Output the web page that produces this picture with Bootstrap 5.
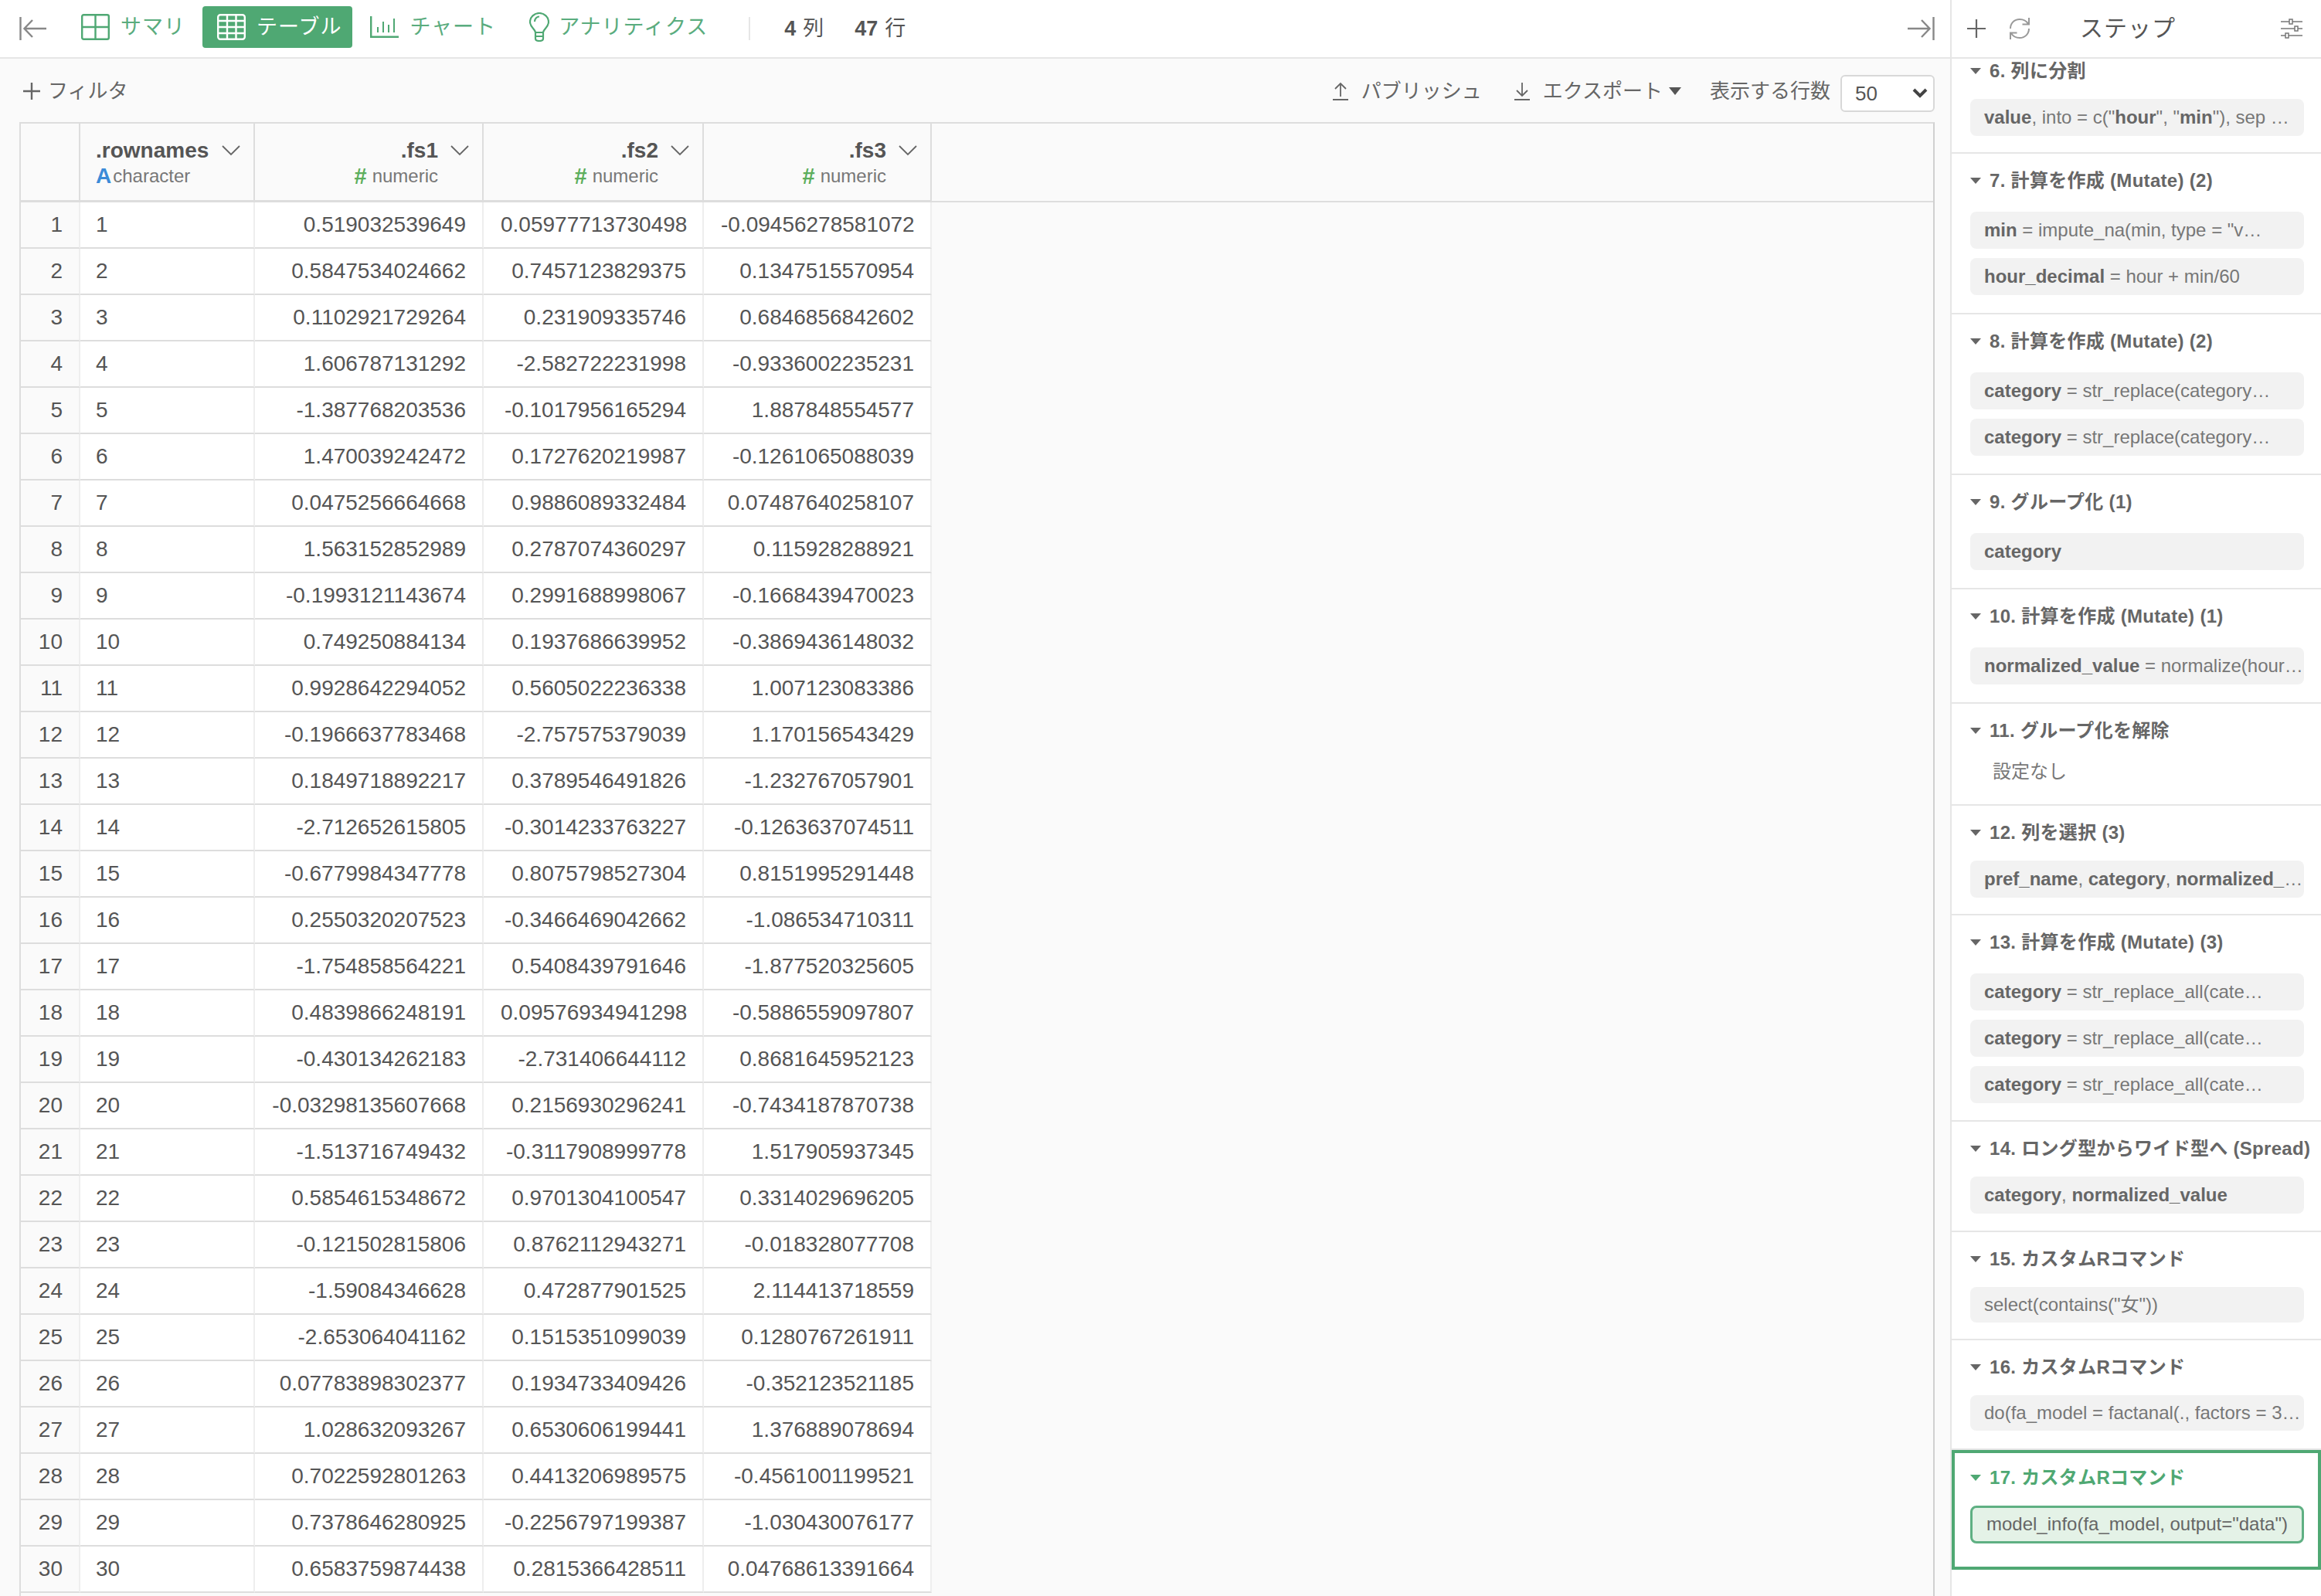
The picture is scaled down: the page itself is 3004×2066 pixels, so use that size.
<!DOCTYPE html>
<html lang="ja">
<head>
<meta charset="utf-8">
<title>テーブル</title>
<link href="https://cdn.jsdelivr.net/npm/bootstrap@5.3.0/dist/css/bootstrap.min.css" rel="stylesheet">
<style>
html,body{height:2066px;overflow:hidden}
body{font-family:"Liberation Sans","Noto Sans CJK JP",sans-serif;background:#fff;color:#555;font-size:26px}
:root{--ex-green:#4fa873}
.app-shell{height:2066px;width:3004px}
.main-col{width:2526px;border-right:2px solid #e6e6e6;background:#fafafa}
.top-bar{height:76px;background:#fff;border-bottom:2px solid #e6e6e6}
.top-bar svg,.side-head svg{flex:none;display:block}
.back-ico{margin-left:25px}
.view-tabs{margin-left:26px;gap:6px;margin-top:-4px}
.view-tab{height:54px;padding:0 16px 0 19px;color:#5aac7e;font-size:27px;letter-spacing:1px;gap:14px;text-decoration:none;border-radius:4px;line-height:1}
.view-tab.is-on{background:var(--ex-green);color:#fff;padding-right:14px;margin-right:-2px}
.tab-chart{padding-right:18px}
.tab-ins{padding-left:19px;gap:12px}
.bar-sep{width:2px;height:30px;background:#e6e6e6;margin-left:37px;margin-right:44px}
.dim-txt{margin-right:40px;color:#555;font-size:27px}
.dim-txt b{margin-right:9px}
.fwd-ico{margin-right:20px}
.tool-row{height:82px;padding:2px 20px 0 30px;color:#666}
.plain-act{gap:10px;line-height:1;color:#666}
.plain-act .act-ico{flex:none}
.act-pub{margin-right:42px;gap:17px}
.act-exp{margin-right:37px;gap:17px}
.act-exp .caret-ico{margin-left:-9px}
.row-sel{width:122px;height:48px;font-size:26px;padding:0 0 0 17px;color:#555;border:2px solid #d8d8d8;border-radius:6px;background-color:#fff;background-image:url("data:image/svg+xml,%3csvg xmlns='http://www.w3.org/2000/svg' viewBox='0 0 20 14'%3e%3cpath fill='none' stroke='%23444' stroke-width='4' d='M2 2l8 8 8-8'/%3e%3c/svg%3e");background-size:20px 14px;background-position:right 7px center;margin-left:13px;margin-top:6px}
.grid-wrap{margin:0 20px 0 25px;border:2px solid #ddd;border-bottom:0;border-right-color:#d0d0d0;background:#fafafa;height:1908px;overflow:hidden}
.data-grid{table-layout:fixed;width:100%;border-collapse:separate;border-spacing:0;margin:0;font-size:28px;--bs-table-bg:transparent;color:#555}
.data-grid th,.data-grid td{padding:0 21px 0 22px;line-height:1.2;color:#555;box-shadow:none}
.data-grid thead th{height:102px;background:#fafafa;border-right:2px solid #ddd;border-bottom:3px solid #ddd;font-weight:700;vertical-align:top}
.data-grid thead th.fill-col{border-right:0;border-bottom:2px solid #ddd}
.data-grid tbody td{height:60px;background:#fff;border-right:2px solid #eee;border-bottom:2px solid #ddd;vertical-align:middle;text-align:right;white-space:nowrap;font-weight:400}
.data-grid tbody td.idx-cell{background:#fafafa}
.data-grid tbody td.name-cell{text-align:left;padding-left:20px}
.data-grid tbody td.fill-col{background:transparent;border:0}
.w-idx{width:77px}.w-name{width:226px}.w-a{width:296px}.w-b{width:285px}.w-c{width:295px}
.data-grid th.w-name{padding-left:20px;padding-right:17px}
.head-name{height:32px;margin-top:19px;line-height:32px;gap:16px}
.head-type{font-size:24px;font-weight:400;line-height:28px;color:#777;margin-top:3px;gap:2px}
.data-grid th.num-col{padding-right:17px}
.data-grid th.num-col .head-type{padding-right:40px;gap:7px}
.t-num{color:#5cae5c;font-weight:700;font-size:29px}
.t-chr{color:#3b8bd8;font-weight:700;font-size:28px;line-height:28px}
.side-col{width:478px;background:#fff}
.side-head{height:76px;border-bottom:2px solid #e6e6e6;padding:0 24px 0 20px}
.refresh-ico{margin-left:30px}
.side-title{font-size:30px;letter-spacing:1px;color:#555;margin-left:64px;line-height:1;margin-right:auto}
.step-box{padding:19px 22px 23px 24px;border-bottom:2px solid #e6e6e6}
.step-head{height:32px;line-height:32px;font-size:24px;font-weight:700;color:#666;gap:11px;margin-bottom:24px;white-space:nowrap;letter-spacing:.3px}
.step-head svg{flex:none}
.step-first{padding-top:0}
.tight .step-head{margin-bottom:20px}
.tight{padding-bottom:21px}
.pad-24{padding-bottom:22px}
.pad-25{padding-bottom:23px}
.chip-line{height:48px;line-height:47px;background:#f2f2f2;border-radius:8px;padding:0 10px 0 18px;font-size:24px;color:#777;white-space:nowrap;overflow:hidden;margin-bottom:12px}
.chip-line:last-child{margin-bottom:0}
.chip-line b{color:#666}
.chip-low{height:46px;line-height:45px}
.no-set{font-size:24px;color:#777;line-height:32px;padding-left:29px;margin-top:-3px;margin-bottom:3px}
.step-on{border:4px solid var(--ex-green);padding:16px 18px 30px 20px}
.step-on .step-head{color:var(--ex-green);margin-bottom:20px}
.chip-on{height:49px;line-height:41px;background:#e4f2e7;border:3px solid #5fb083;padding-right:4px;color:#666}
</style>
</head>
<body>
<div class="app-shell d-flex">
  <div class="main-col d-flex flex-column">
    <div class="top-bar d-flex align-items-center">
      <svg class="back-ico" width="35" height="32" viewBox="0 0 35 32" fill="none" stroke="#888" stroke-width="2.4"><path d="M1.500 1v30M35 16H7M17 5 6.500 16 17 27"/></svg>
      <div class="view-tabs d-flex align-items-center">
        <a class="view-tab d-flex align-items-center" href="#">
          <svg width="37" height="34" viewBox="0 0 37 34" fill="none" stroke="#4fa873" stroke-width="2.4"><rect x="1.200" y="1.200" width="34.600" height="31.600" rx="2"/><path d="M18.500 1v32M1 17h35"/></svg>サマリ</a>
        <a class="view-tab is-on d-flex align-items-center" href="#">
          <svg width="37" height="34" viewBox="0 0 37 34" fill="none" stroke="#fff" stroke-width="2.400"><rect x="1.200" y="1.200" width="34.600" height="31.600" rx="3"/><path d="M13 1v32M24.500 1v32M1 9h35M1 17h35M1 25h35"/></svg>テーブル</a>
        <a class="view-tab tab-chart d-flex align-items-center" href="#">
          <svg width="37" height="28" viewBox="0 0 37 28" fill="none" stroke="#4fa873"><path stroke-width="2.400" d="M1.200 0v26.800H37"/><path stroke-width="2" d="M10 14v7M17 7v14M24 11v10M31 3v18"/></svg>チャート</a>
        <a class="view-tab tab-ins d-flex align-items-center" href="#">
          <svg width="26" height="38" viewBox="0 0 26 38" fill="none" stroke="#4fa873" stroke-width="2.200"><path d="M8 26c0-4-7-7-7-13.500a12 11.500 0 0 1 24 0C25 19 18 22 18 26ZM8 26v8c0 2 2 3 5 3s5-1 5-3v-8M8 31h10M7 12c0-4 3-6.500 6-6.500"/></svg>アナリティクス</a>
      </div>
      <div class="bar-sep"></div>
      <span class="dim-txt"><b>4</b>列</span>
      <span class="dim-txt"><b>47</b>行</span>
      <svg class="fwd-ico ms-auto" width="35" height="32" viewBox="0 0 35 32" fill="none" stroke="#888" stroke-width="2.400"><path d="M33.500 1v30M0 16h28M18 5l10.500 11L18 27"/></svg>
    </div>
    <div class="tool-row d-flex align-items-center">
      <span class="plain-act d-flex align-items-center me-auto">
        <svg class="act-ico" width="22" height="22" viewBox="0 0 22 22" stroke="#666" stroke-width="2.400"><path d="M11 0v22M0 11h22"/></svg>フィルタ</span>
      <span class="plain-act act-pub d-flex align-items-center">
        <svg class="act-ico" width="20" height="24" viewBox="0 0 20 24" fill="none" stroke="#666" stroke-width="1.800"><path d="M10 19V2M3 9l7-7 7 7M0 23h20"/></svg>パブリッシュ</span>
      <span class="plain-act act-exp d-flex align-items-center">
        <svg class="act-ico" width="20" height="24" viewBox="0 0 20 24" fill="none" stroke="#666" stroke-width="1.800"><path d="M10 1v17M3 11l7 7 7-7M0 23h20"/></svg>エクスポート
        <svg class="act-ico caret-ico" width="16" height="10" viewBox="0 0 16 10" fill="#555"><path d="M0 0h16L8 10Z"/></svg></span>
      <span class="plain-act">表示する行数</span>
      <select class="form-select row-sel" aria-label="行数"><option>50</option></select>
    </div>
    <div class="grid-wrap">
      <table class="table data-grid">
        <thead>
          <tr>
            <th class="w-idx"></th>
            <th class="w-name">
              <div class="head-name d-flex align-items-center justify-content-between"><span>.rownames</span><svg width="24" height="14" viewBox="0 0 24 14" fill="none" stroke="#666" stroke-width="1.800"><path d="M1 1l11 11L23 1"/></svg></div>
              <div class="head-type d-flex align-items-center"><span class="t-chr">A</span><span>character</span></div>
            </th>
            <th class="w-a num-col">
              <div class="head-name d-flex align-items-center justify-content-end"><span>.fs1</span><svg width="24" height="14" viewBox="0 0 24 14" fill="none" stroke="#666" stroke-width="1.800"><path d="M1 1l11 11L23 1"/></svg></div>
              <div class="head-type d-flex align-items-center justify-content-end"><span class="t-num">#</span><span>numeric</span></div>
            </th>
            <th class="w-b num-col">
              <div class="head-name d-flex align-items-center justify-content-end"><span>.fs2</span><svg width="24" height="14" viewBox="0 0 24 14" fill="none" stroke="#666" stroke-width="1.800"><path d="M1 1l11 11L23 1"/></svg></div>
              <div class="head-type d-flex align-items-center justify-content-end"><span class="t-num">#</span><span>numeric</span></div>
            </th>
            <th class="w-c num-col">
              <div class="head-name d-flex align-items-center justify-content-end"><span>.fs3</span><svg width="24" height="14" viewBox="0 0 24 14" fill="none" stroke="#666" stroke-width="1.800"><path d="M1 1l11 11L23 1"/></svg></div>
              <div class="head-type d-flex align-items-center justify-content-end"><span class="t-num">#</span><span>numeric</span></div>
            </th>
            <th class="fill-col"></th>
          </tr>
        </thead>
        <tbody>
          <tr><td class="idx-cell">1</td><td class="name-cell">1</td><td>0.519032539649</td><td>0.05977713730498</td><td>-0.09456278581072</td><td class="fill-col"></td></tr>
          <tr><td class="idx-cell">2</td><td class="name-cell">2</td><td>0.5847534024662</td><td>0.7457123829375</td><td>0.1347515570954</td><td class="fill-col"></td></tr>
          <tr><td class="idx-cell">3</td><td class="name-cell">3</td><td>0.1102921729264</td><td>0.231909335746</td><td>0.6846856842602</td><td class="fill-col"></td></tr>
          <tr><td class="idx-cell">4</td><td class="name-cell">4</td><td>1.606787131292</td><td>-2.582722231998</td><td>-0.9336002235231</td><td class="fill-col"></td></tr>
          <tr><td class="idx-cell">5</td><td class="name-cell">5</td><td>-1.387768203536</td><td>-0.1017956165294</td><td>1.887848554577</td><td class="fill-col"></td></tr>
          <tr><td class="idx-cell">6</td><td class="name-cell">6</td><td>1.470039242472</td><td>0.1727620219987</td><td>-0.1261065088039</td><td class="fill-col"></td></tr>
          <tr><td class="idx-cell">7</td><td class="name-cell">7</td><td>0.0475256664668</td><td>0.9886089332484</td><td>0.07487640258107</td><td class="fill-col"></td></tr>
          <tr><td class="idx-cell">8</td><td class="name-cell">8</td><td>1.563152852989</td><td>0.2787074360297</td><td>0.115928288921</td><td class="fill-col"></td></tr>
          <tr><td class="idx-cell">9</td><td class="name-cell">9</td><td>-0.1993121143674</td><td>0.2991688998067</td><td>-0.1668439470023</td><td class="fill-col"></td></tr>
          <tr><td class="idx-cell">10</td><td class="name-cell">10</td><td>0.749250884134</td><td>0.1937686639952</td><td>-0.3869436148032</td><td class="fill-col"></td></tr>
          <tr><td class="idx-cell">11</td><td class="name-cell">11</td><td>0.9928642294052</td><td>0.5605022236338</td><td>1.007123083386</td><td class="fill-col"></td></tr>
          <tr><td class="idx-cell">12</td><td class="name-cell">12</td><td>-0.1966637783468</td><td>-2.757575379039</td><td>1.170156543429</td><td class="fill-col"></td></tr>
          <tr><td class="idx-cell">13</td><td class="name-cell">13</td><td>0.1849718892217</td><td>0.3789546491826</td><td>-1.232767057901</td><td class="fill-col"></td></tr>
          <tr><td class="idx-cell">14</td><td class="name-cell">14</td><td>-2.712652615805</td><td>-0.3014233763227</td><td>-0.1263637074511</td><td class="fill-col"></td></tr>
          <tr><td class="idx-cell">15</td><td class="name-cell">15</td><td>-0.6779984347778</td><td>0.8075798527304</td><td>0.8151995291448</td><td class="fill-col"></td></tr>
          <tr><td class="idx-cell">16</td><td class="name-cell">16</td><td>0.2550320207523</td><td>-0.3466469042662</td><td>-1.086534710311</td><td class="fill-col"></td></tr>
          <tr><td class="idx-cell">17</td><td class="name-cell">17</td><td>-1.754858564221</td><td>0.5408439791646</td><td>-1.877520325605</td><td class="fill-col"></td></tr>
          <tr><td class="idx-cell">18</td><td class="name-cell">18</td><td>0.4839866248191</td><td>0.09576934941298</td><td>-0.5886559097807</td><td class="fill-col"></td></tr>
          <tr><td class="idx-cell">19</td><td class="name-cell">19</td><td>-0.430134262183</td><td>-2.731406644112</td><td>0.8681645952123</td><td class="fill-col"></td></tr>
          <tr><td class="idx-cell">20</td><td class="name-cell">20</td><td>-0.03298135607668</td><td>0.2156930296241</td><td>-0.7434187870738</td><td class="fill-col"></td></tr>
          <tr><td class="idx-cell">21</td><td class="name-cell">21</td><td>-1.513716749432</td><td>-0.3117908999778</td><td>1.517905937345</td><td class="fill-col"></td></tr>
          <tr><td class="idx-cell">22</td><td class="name-cell">22</td><td>0.5854615348672</td><td>0.9701304100547</td><td>0.3314029696205</td><td class="fill-col"></td></tr>
          <tr><td class="idx-cell">23</td><td class="name-cell">23</td><td>-0.121502815806</td><td>0.8762112943271</td><td>-0.018328077708</td><td class="fill-col"></td></tr>
          <tr><td class="idx-cell">24</td><td class="name-cell">24</td><td>-1.59084346628</td><td>0.472877901525</td><td>2.114413718559</td><td class="fill-col"></td></tr>
          <tr><td class="idx-cell">25</td><td class="name-cell">25</td><td>-2.653064041162</td><td>0.1515351099039</td><td>0.1280767261911</td><td class="fill-col"></td></tr>
          <tr><td class="idx-cell">26</td><td class="name-cell">26</td><td>0.07783898302377</td><td>0.1934733409426</td><td>-0.352123521185</td><td class="fill-col"></td></tr>
          <tr><td class="idx-cell">27</td><td class="name-cell">27</td><td>1.028632093267</td><td>0.6530606199441</td><td>1.376889078694</td><td class="fill-col"></td></tr>
          <tr><td class="idx-cell">28</td><td class="name-cell">28</td><td>0.7022592801263</td><td>0.4413206989575</td><td>-0.4561001199521</td><td class="fill-col"></td></tr>
          <tr><td class="idx-cell">29</td><td class="name-cell">29</td><td>0.7378646280925</td><td>-0.2256797199387</td><td>-1.030430076177</td><td class="fill-col"></td></tr>
          <tr><td class="idx-cell">30</td><td class="name-cell">30</td><td>0.6583759874438</td><td>0.2815366428511</td><td>0.04768613391664</td><td class="fill-col"></td></tr>
        </tbody>
      </table>
    </div>
  </div>
  <div class="side-col d-flex flex-column">
    <div class="side-head d-flex align-items-center">
      <svg width="24" height="24" viewBox="0 0 24 24" stroke="#666" stroke-width="2.200"><path d="M12 0v24M0 12h24"/></svg>
      <svg class="refresh-ico" width="28" height="30" viewBox="0 0 28 30" fill="none" stroke="#999" stroke-width="2"><path d="M2 15C2 8 7 3 14 3c5 0 9 2.500 11 6M26 1v8.500h-8.500M26 15c0 7-5 12-12 12-5 0-9-2.500-11-6M2 29v-8.500h8.500"/></svg>
      <span class="side-title">ステップ</span>
      <svg width="28" height="26" viewBox="0 0 28 26" fill="none" stroke="#777" stroke-width="1.500"><path d="M0 4h11M15 4h13M0 13h18M22 13h6M0 22h6M10 22h18"/><rect x="11" y="1" width="4" height="6"/><rect x="18" y="10" width="4" height="6"/><rect x="6" y="19" width="4" height="6"/></svg>
    </div>
    <div class="step-box step-first tight">
      <div class="step-head d-flex align-items-center"><svg width="14" height="8" viewBox="0 0 14 8" fill="#666"><path d="M0 0h14L7 8Z"/></svg>6. 列に分割</div>
      <div class="chip-line"><b>value</b>, into = c("<b>hour</b>", "<b>min</b>"), sep …</div>
    </div>
    <div class="step-box">
      <div class="step-head d-flex align-items-center"><svg width="14" height="8" viewBox="0 0 14 8" fill="#666"><path d="M0 0h14L7 8Z"/></svg>7. 計算を作成 (Mutate) (2)</div>
      <div class="chip-line"><b>min</b> = impute_na(min, type = "v…</div>
      <div class="chip-line"><b>hour_decimal</b> = hour + min/60</div>
    </div>
    <div class="step-box">
      <div class="step-head d-flex align-items-center"><svg width="14" height="8" viewBox="0 0 14 8" fill="#666"><path d="M0 0h14L7 8Z"/></svg>8. 計算を作成 (Mutate) (2)</div>
      <div class="chip-line"><b>category</b> = str_replace(category…</div>
      <div class="chip-line"><b>category</b> = str_replace(category…</div>
    </div>
    <div class="step-box">
      <div class="step-head d-flex align-items-center"><svg width="14" height="8" viewBox="0 0 14 8" fill="#666"><path d="M0 0h14L7 8Z"/></svg>9. グループ化 (1)</div>
      <div class="chip-line"><b>category</b></div>
    </div>
    <div class="step-box">
      <div class="step-head d-flex align-items-center"><svg width="14" height="8" viewBox="0 0 14 8" fill="#666"><path d="M0 0h14L7 8Z"/></svg>10. 計算を作成 (Mutate) (1)</div>
      <div class="chip-line"><b>normalized_value</b> = normalize(hour…</div>
    </div>
    <div class="step-box">
      <div class="step-head d-flex align-items-center"><svg width="14" height="8" viewBox="0 0 14 8" fill="#666"><path d="M0 0h14L7 8Z"/></svg>11. グループ化を解除</div>
      <p class="no-set">設定なし</p>
    </div>
    <div class="step-box tight">
      <div class="step-head d-flex align-items-center"><svg width="14" height="8" viewBox="0 0 14 8" fill="#666"><path d="M0 0h14L7 8Z"/></svg>12. 列を選択 (3)</div>
      <div class="chip-line"><b>pref_name</b>, <b>category</b>, <b>normalized_</b>…</div>
    </div>
    <div class="step-box pad-24">
      <div class="step-head d-flex align-items-center"><svg width="14" height="8" viewBox="0 0 14 8" fill="#666"><path d="M0 0h14L7 8Z"/></svg>13. 計算を作成 (Mutate) (3)</div>
      <div class="chip-line"><b>category</b> = str_replace_all(cate…</div>
      <div class="chip-line"><b>category</b> = str_replace_all(cate…</div>
      <div class="chip-line"><b>category</b> = str_replace_all(cate…</div>
    </div>
    <div class="step-box tight pad-24">
      <div class="step-head d-flex align-items-center"><svg width="14" height="8" viewBox="0 0 14 8" fill="#666"><path d="M0 0h14L7 8Z"/></svg>14. ロング型からワイド型へ (Spread)</div>
      <div class="chip-line"><b>category</b>, <b>normalized_value</b></div>
    </div>
    <div class="step-box tight">
      <div class="step-head d-flex align-items-center"><svg width="14" height="8" viewBox="0 0 14 8" fill="#666"><path d="M0 0h14L7 8Z"/></svg>15. カスタムRコマンド</div>
      <div class="chip-line chip-low">select(contains("女"))</div>
    </div>
    <div class="step-box tight pad-25">
      <div class="step-head d-flex align-items-center"><svg width="14" height="8" viewBox="0 0 14 8" fill="#666"><path d="M0 0h14L7 8Z"/></svg>16. カスタムRコマンド</div>
      <div class="chip-line chip-low">do(fa_model = factanal(., factors = 3…</div>
    </div>
    <div class="step-box step-on">
      <div class="step-head d-flex align-items-center"><svg width="14" height="8" viewBox="0 0 14 8" fill="#4fa873"><path d="M0 0h14L7 8Z"/></svg>17. カスタムRコマンド</div>
      <div class="chip-line chip-on">model_info(fa_model, output="data")</div>
    </div>
  </div>
</div>
<script src="https://cdn.jsdelivr.net/npm/bootstrap@5.3.0/dist/js/bootstrap.bundle.min.js"></script>
</body>
</html>
